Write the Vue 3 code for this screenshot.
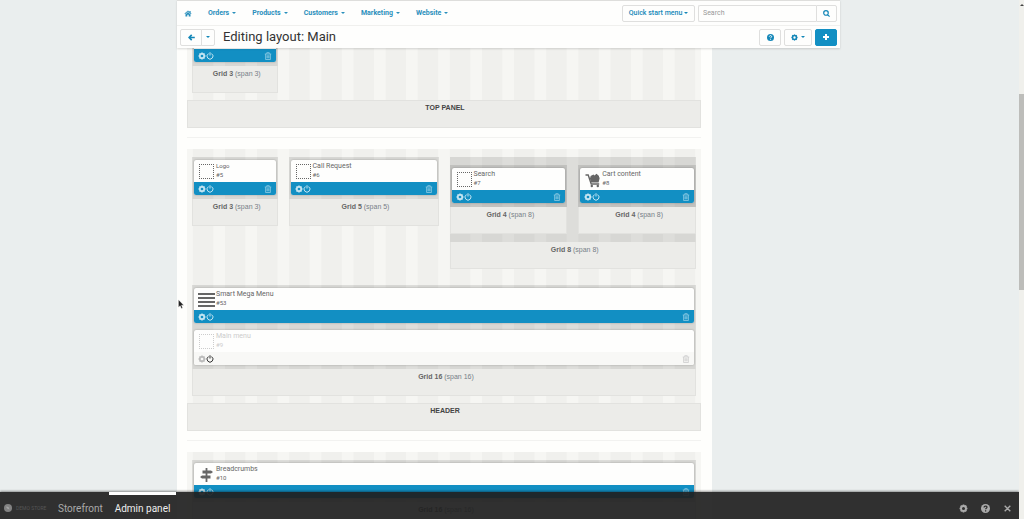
<script setup>
import { ref } from 'vue'

const menu = ['Orders', 'Products', 'Customers', 'Marketing', 'Website']
const query = ref('')

const containers = [
  {
    key: 'top',
    name: 'TOP PANEL',
    grids: [
      { size: 3, span: 3, blocks: [{ id: 3 }] },
    ],
  },
  {
    key: 'header',
    name: 'HEADER',
    grids: [
      { size: 3, span: 3, blocks: [{ title: 'Logo', id: 5, icon: 'dots', small: true }] },
      { size: 5, span: 5, blocks: [{ title: 'Call Request', id: 6, icon: 'dots' }] },
      {
        size: 8,
        span: 8,
        children: [
          { size: 4, span: 8, blocks: [{ title: 'Search', id: 7, icon: 'dots' }] },
          { size: 4, span: 8, blocks: [{ title: 'Cart content', id: 8, icon: 'cart' }] },
        ],
      },
      {
        size: 16,
        span: 16,
        blocks: [
          { title: 'Smart Mega Menu', id: 53, icon: 'bars' },
          { title: 'Main menu', id: 9, icon: 'dots', off: true },
        ],
      },
    ],
  },
  {
    key: 'content',
    grids: [
      { size: 16, span: 16, blocks: [{ title: 'Breadcrumbs', id: 10, icon: 'sign' }] },
    ],
  },
]

// A grid that nests others is drawn with one cell per child, any other with a single cell.
const cells = (grid) => grid.children ?? [grid]
</script>

<template>
  <div class="screen">
    <svg class="sprite" aria-hidden="true">
      <symbol id="gear" viewBox="0 0 16 16">
        <circle cx="8" cy="8" r="4.4" fill="none" stroke="currentColor" stroke-width="3.4" />
        <path d="M8 1v3M8 12v3M1 8h3M12 8h3M3 3l2 2M11 11l2 2M3 13l2-2M11 5l2-2" stroke="currentColor" stroke-width="3" />
      </symbol>
      <symbol id="power" viewBox="0 0 16 16">
        <path d="M4.200 3.600a6 6 0 1 0 7.600 0" fill="none" stroke="currentColor" stroke-width="2" stroke-linecap="round" />
        <path d="M8 .5v6.500" stroke="currentColor" stroke-width="2" />
      </symbol>
      <symbol id="trash" viewBox="0 0 16 16">
        <path d="M1.500 4h13M5.500 3.600V1.400h5v2.200M3.200 4.200V15h9.600V4.200M6 6.500v6M8 6.500v6M10 6.500v6" fill="none" stroke="currentColor" stroke-width="1.500" />
      </symbol>
      <symbol id="help" viewBox="0 0 16 16">
        <circle cx="8" cy="8" r="8" fill="currentColor" />
        <path d="M5.400 6.200c0-3.400 5.200-3.200 5.200-.4 0 1.800-2.400 1.800-2.400 3.700M8.200 11v2.200" fill="none" stroke="var(--hole)" stroke-width="2.200" />
      </symbol>
      <symbol id="dots" viewBox="0 0 17 17">
        <path d="M1 1.500h15M1 15.500h15M1.500 1v15M15.500 1v15" fill="none" stroke="currentColor" stroke-width="1" stroke-dasharray="1 1" />
      </symbol>
      <symbol id="bars" viewBox="0 0 17 17">
        <path d="M0 3h17M0 7h17M0 11h17M0 15h17" stroke="currentColor" stroke-width="2" />
      </symbol>
      <symbol id="cart" viewBox="0 0 17 17">
        <path d="M1.500 4h2.700l3 9h8" fill="none" stroke="currentColor" stroke-width="1.400" />
        <path d="M5.500 6.500h1V5l3-1.500 1 1 2-1.700L15 5v1.500h.8l-1.200 5H7.200z" fill="currentColor" />
        <circle cx="7.800" cy="15" r="1.200" fill="currentColor" />
        <circle cx="13.800" cy="15" r="1.200" fill="currentColor" />
      </symbol>
      <symbol id="sign" viewBox="0 0 17 17">
        <path d="M8.500 2v14" stroke="currentColor" stroke-width="1.800" />
        <path d="M4.500 4.500H13l2 1.500-2 1.500H4.500zM12.500 9.500H4l-2 1.500 2 1.500h8.500z" fill="currentColor" />
      </symbol>
    </svg>

    <header class="top">
      <nav class="bar">
        <a class="home" href="#" aria-label="Home">
          <svg viewBox="0 0 16 16"><path d="M8 1l8 7.200-1.200 1.400L8 3.600 1.200 9.600 0 8.200zM11.500 2H14v4.500l-2.500-2zM8 4.800l5.800 5.200v5H9.600v-4H6.400v4H2.200v-5z" fill="currentColor" /></svg>
        </a>
        <a v-for="item in menu" :key="item" class="item" href="#">{{ item }}<i class="caret"></i></a>
        <button class="btn quick">Quick start menu<i class="caret"></i></button>
        <form class="search" @submit.prevent>
          <input v-model="query" type="text" placeholder="Search" aria-label="Search" />
          <button class="btn find" aria-label="Find">
            <svg viewBox="0 0 16 16"><path d="M10.500 10.500L15 15M12 6.800a5.200 5.200 0 1 1-10.400 0 5.200 5.200 0 0 1 10.400 0z" fill="none" stroke="currentColor" stroke-width="2.800" /></svg>
          </button>
        </form>
      </nav>
      <div class="bar second">
        <div class="back">
          <button class="btn" aria-label="Back">
            <svg viewBox="0 0 16 16"><path d="M8.500 2L2.500 8l6 6M3 8h12.500" fill="none" stroke="currentColor" stroke-width="3.800" /></svg>
          </button>
          <button class="btn narrow" aria-label="History"><i class="caret"></i></button>
        </div>
        <h1>Editing layout: Main</h1>
        <button class="btn tool" aria-label="Help"><svg><use href="#help" /></svg></button>
        <button class="btn tool wide" aria-label="Settings"><svg><use href="#gear" /></svg><i class="caret"></i></button>
        <button class="btn tool add" aria-label="Add"><svg viewBox="0 0 16 16"><path d="M8 2v12M2 8h12" stroke="currentColor" stroke-width="4" /></svg></button>
      </div>
    </header>

    <main class="page">
      <section v-for="box in containers" :key="box.key" class="container">
        <div class="grids">
          <div
            v-for="(grid, g) in box.grids"
            :key="g"
            class="grid"
            :class="{ parent: grid.children }"
            :style="{ gridColumn: 'span ' + grid.size }"
          >
            <div class="cells">
              <div v-for="(cell, c) in cells(grid)" :key="c" class="cell">
                <div class="stack">
                  <article v-for="block in cell.blocks" :key="block.id" class="block" :class="{ off: block.off }">
                    <div class="info">
                      <template v-if="block.title">
                        <svg><use :href="'#' + block.icon" /></svg>
                        <div>
                          <h3 :class="{ small: block.small }">{{ block.title }}</h3>
                          <p>#{{ block.id }}</p>
                        </div>
                      </template>
                    </div>
                    <div class="actions">
                      <button aria-label="Settings"><svg><use href="#gear" /></svg></button>
                      <button class="power" aria-label="Toggle"><svg><use href="#power" /></svg></button>
                      <button class="remove" aria-label="Remove"><svg><use href="#trash" /></svg></button>
                    </div>
                  </article>
                </div>
                <div class="label"><b>Grid {{ cell.size }}</b> (span {{ cell.span }})</div>
              </div>
            </div>
            <div v-if="grid.children" class="label"><b>Grid {{ grid.size }}</b> (span {{ grid.span }})</div>
          </div>
        </div>
        <h2 v-if="box.name">{{ box.name }}</h2>
      </section>
    </main>

    <svg class="pointer" viewBox="0 0 8 12" aria-hidden="true"><path d="M.5.5v8.500l2-1.600 1.400 3.200 1.400-.6L4 6.800h2.600z" fill="#222" stroke="#fff" stroke-width=".4" /></svg>

    <div class="scroll" aria-hidden="true"><span class="up"></span><span class="thumb"></span></div>

    <footer class="dock">
      <svg class="logo" viewBox="0 0 16 16"><circle cx="8" cy="8" r="8" fill="#828282" /><path d="M4 5l5 1 2 5-5-2z" fill="#a5a5a5" /></svg>
      <span class="demo">DEMO STORE</span>
      <a href="#">Storefront</a>
      <a href="#" class="current">Admin panel</a>
      <div class="tools">
        <button aria-label="Settings"><svg><use href="#gear" /></svg></button>
        <button aria-label="Help"><svg><use href="#help" /></svg></button>
        <button aria-label="Close"><svg viewBox="0 0 16 16"><path d="M3 3l10 10M13 3L3 13" stroke="currentColor" stroke-width="2.400" /></svg></button>
      </div>
    </footer>
  </div>
</template>

<style>
html, body { margin: 0; overflow: hidden; background: #eaeeee; }
</style>

<style scoped>
* { box-sizing: border-box; }
.screen {
  position: relative;
  height: 100vh;
  overflow: hidden;
  background: #eaeeee;
  font: 7px/10px Roboto, "Liberation Sans", sans-serif;
  color: #555;
}
.sprite { position: absolute; width: 0; height: 0; }
svg { display: block; width: 8px; height: 8px; flex: none; }
button { padding: 0; border: 0; background: none; color: inherit; font: inherit; display: flex; align-items: center; justify-content: center; }
a { color: inherit; text-decoration: none; }
h1, h2, h3, p { margin: 0; font-weight: 400; }

.top {
  position: absolute;
  z-index: 2;
  top: 0;
  left: 177px;
  right: 0;
  max-width: 663px;
  background: #fefefd;
  border-top: 1px solid #dededc;
  box-shadow: 0 1px 2px rgba(0, 0, 0, .15);
  color: #2a8fbc;
}
.bar { display: flex; align-items: center; height: 25px; padding: 0 3px 0 7px; border-bottom: 1px solid #f0f0ee; font-weight: 700; }
.home { margin-right: 16px; }
.home svg { width: 8px; height: 7px; }
.item { display: flex; align-items: center; margin-right: 16px; }
.caret { border: 2px solid transparent; border-top-color: currentColor; border-bottom: 0; margin-left: 3px; }
.btn { height: 17px; border: 1px solid #dfdfde; border-radius: 2px; background: #fefefd; color: #1487b8; }
.quick { width: 73px; margin-left: auto; font-size: 7px; font-weight: 500; }
.quick .caret { margin-left: 2px; }
.search { display: flex; margin-left: 3px; }
.search input { width: 118px; height: 17px; padding: 0 4px; border: 1px solid #dfdfde; border-right: 0; border-radius: 2px 0 0 2px; background: #fefefd; font: 7px Roboto, sans-serif; color: #555; outline: 0; }
.search input::placeholder { color: #999; opacity: 1; }
.find { width: 21px; border-radius: 0 2px 2px 0; }
.find svg { width: 7px; height: 7px; }
.second { height: 22px; padding-left: 3px; border: 0; }
.back { display: flex; }
.back .btn { width: 22px; border-radius: 2px 0 0 2px; }
.back .narrow { width: 14px; margin-left: -1px; border-radius: 0 2px 2px 0; }
.back .caret { margin: 0; }
.back svg { width: 7px; height: 7px; }
h1 { flex: 1; margin-left: 8px; font-size: 13px; line-height: 20px; color: #333; }
.tool { width: 22px; margin-left: 3px; --hole: #fefefd; }
.tool svg { width: 7px; height: 7px; }
.wide { width: 28px; }
.add { background: #128fc3; border-color: #128fc3; color: #fff; }
.add svg { width: 8px; height: 8px; }

.page { max-width: 535px; min-height: 100vh; margin-left: 177px; padding: 16px 11px 0 10px; background: #fefefc; }
.container { margin-bottom: 21px; position: relative; }
.container::after { content: ""; position: absolute; left: 0; right: 0; bottom: -10px; border-top: 1px solid #f2f2f0; }
.grids {
  display: grid;
  grid-template-columns: repeat(16, minmax(0, 1fr));
  gap: 16px 11px;
  align-items: start;
  padding: 8px 5px 7px;
  background: linear-gradient(90deg, #f6f6f3 17%, #f0f0ed 17% 83%, #f6f6f3 83%) 0 0 / 6.25% 100%;
}
.container h2 { height: 28px; border: 1px solid #e2e2df; background: #ecece9; text-align: center; font: 700 7px/13px "Liberation Sans", sans-serif; color: #444; padding-left: 2px; }
.cell { flex: 1; min-width: 0; }
.cells { display: flex; gap: 11px; }
.parent, .stack { background: rgba(0, 0, 0, .1); }
.parent .cells { padding: 8px 0; }
.stack { display: grid; gap: 7px; padding: 3px 2px 4px; }
.label { height: 27px; padding-left: 4px; border: 1px solid #e2e2df; border-top: 0; background: #ecece9; text-align: center; font: 7px/15px "Liberation Sans", sans-serif; color: #777f88; }
.label b { color: #666; }
.block { height: 35px; border-radius: 2px; background: #fefefd; box-shadow: 0 0 2px rgba(0, 0, 0, .3); overflow: hidden; }
.info { display: flex; height: 22px; padding: 2px 0 0 4px; gap: 1px; color: #666; }
.info svg { width: 17px; height: 17px; margin-top: 1px; }
.info h3 { font-size: 7px; line-height: 8px; }
.info h3.small { font-size: 6px; }
.info p { font-size: 6px; line-height: 10px; }
.actions { display: flex; align-items: center; height: 13px; padding: 0 4px; background: #128fc3; color: #c5e5f2; }
.actions svg { width: 8px; height: 8px; }
.remove { margin-left: auto; opacity: .75; }
.off .info { color: #ccc; }
.off .actions { background: #f8f8f6; color: #bbb; }
.off .power { color: #333; }

.pointer { position: absolute; left: 178px; top: 299px; width: 7px; height: 11px; }

.scroll { position: absolute; z-index: 4; top: 0; right: 0; bottom: 0; width: 5px; background: #f0f0ec; }
.up { position: absolute; top: 4px; left: 1px; border: 2px solid transparent; border-bottom-color: #444; border-top: 0; }
.thumb { position: absolute; top: 94px; left: 0; right: 0; height: 196px; background: #bdbdba; }

.dock {
  position: absolute;
  z-index: 3;
  left: 0;
  right: 5px;
  bottom: 0;
  display: flex;
  align-items: center;
  height: 27px;
  padding: 0 7px 0 4px;
  background: rgba(32, 32, 32, .92);
  box-shadow: 0 -1px 2px rgba(0, 0, 0, .4);
  color: #aaa;
  --hole: #2b2b2b;
}
.logo { margin-top: 4px; }
.demo { width: 35px; margin: 4px 0 0 4px; font-size: 5px; color: #555; white-space: nowrap; }
.dock a { height: 27px; padding: 3px 7px 0; font-size: 10px; line-height: 27px; }
.dock a.current { margin-left: -1px; padding: 0 6px; border-top: 3px solid #fff; color: #eee; }
.tools { display: flex; gap: 13px; margin-left: auto; padding-top: 5px; }
.tools svg { width: 9px; height: 9px; }
</style>
